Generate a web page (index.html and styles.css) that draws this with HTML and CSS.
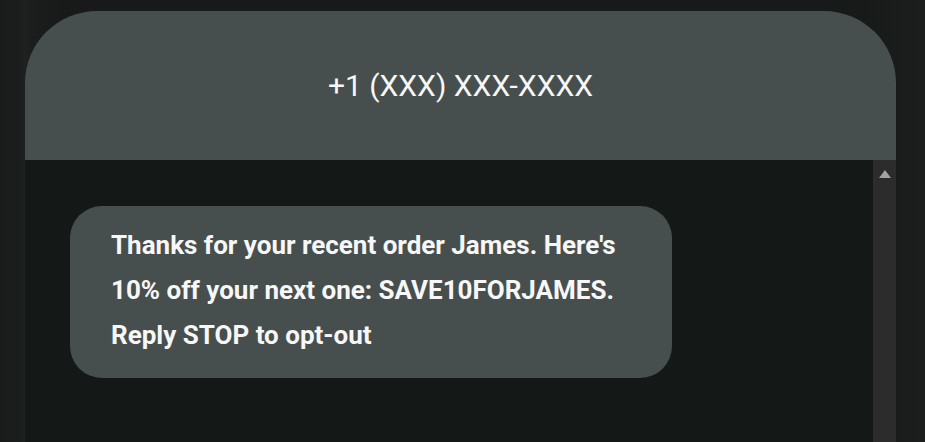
FILE: index.html
```html
<!DOCTYPE html>
<html lang="en">
<head>
    <meta charset="UTF-8">
    <meta name="viewport" content="width=device-width, initial-scale=1.0">
    <title>SMS Preview</title>
    <link rel="stylesheet" href="styles.css">
</head>
<body>
    <div class="stage">
        <div class="phone">
            <div class="phone-header">
                <span class="phone-number">+1 (XXX) XXX-XXXX</span>
            </div>
            <div class="phone-body">
                <div class="messages">
                    <div class="bubble">
                        Thanks for your recent order James. Here's 10% off your next one: SAVE10FORJAMES. Reply STOP to opt-out
                    </div>
                </div>
                <div class="scrollbar">
                    <span class="scroll-arrow"></span>
                </div>
            </div>
        </div>
    </div>
</body>
</html>
```

FILE: styles.css
```css
body, html {
    margin: 0;
    padding: 0;
    height: 100%;
    overflow: hidden;
    background-color: #1b1d1c;
    font-family: Roboto, "Liberation Sans", Arial, sans-serif;
}
.stage {
    height: 100%;
    padding: 11px 29px 0 25px;
    box-sizing: border-box;
    background: linear-gradient(to right, #181b1a 0, #1c1e1d 20px, #1f2120 25px, #1c1e1d 30px, #171a19 60px, #171a19 calc(100% - 60px), #1c1e1d 100%);
}
.phone {
    height: 100%;
    display: flex;
    flex-direction: column;
}
.phone-header {
    height: 149px;
    flex-shrink: 0;
    background-color: #464f4e;
    border-radius: 72px 72px 0 0;
    display: flex;
    align-items: center;
    justify-content: center;
    padding-bottom: 1px;
    box-sizing: border-box;
}
.phone-number {
    color: #f7f7f7;
    font-size: 30px;
}
.phone-body {
    flex-grow: 1;
    display: flex;
    background-color: #141817;
}
.messages {
    flex-grow: 1;
    padding: 46px 0 0 45px;
}
.bubble {
    width: 530px;
    padding: 17px 31px 20px 41px;
    background-color: #464f4e;
    border-radius: 32px;
    color: #f7f7f7;
    font-size: 26px;
    font-weight: bold;
    line-height: 45px;
}
.scrollbar {
    width: 23px;
    background-color: #2c2c2c;
    display: flex;
    justify-content: center;
    padding-top: 10px;
    box-sizing: border-box;
}
.scroll-arrow {
    width: 0;
    height: 0;
    border-left: 6px solid transparent;
    border-right: 6px solid transparent;
    border-bottom: 8px solid #a3a3a3;
}
```
